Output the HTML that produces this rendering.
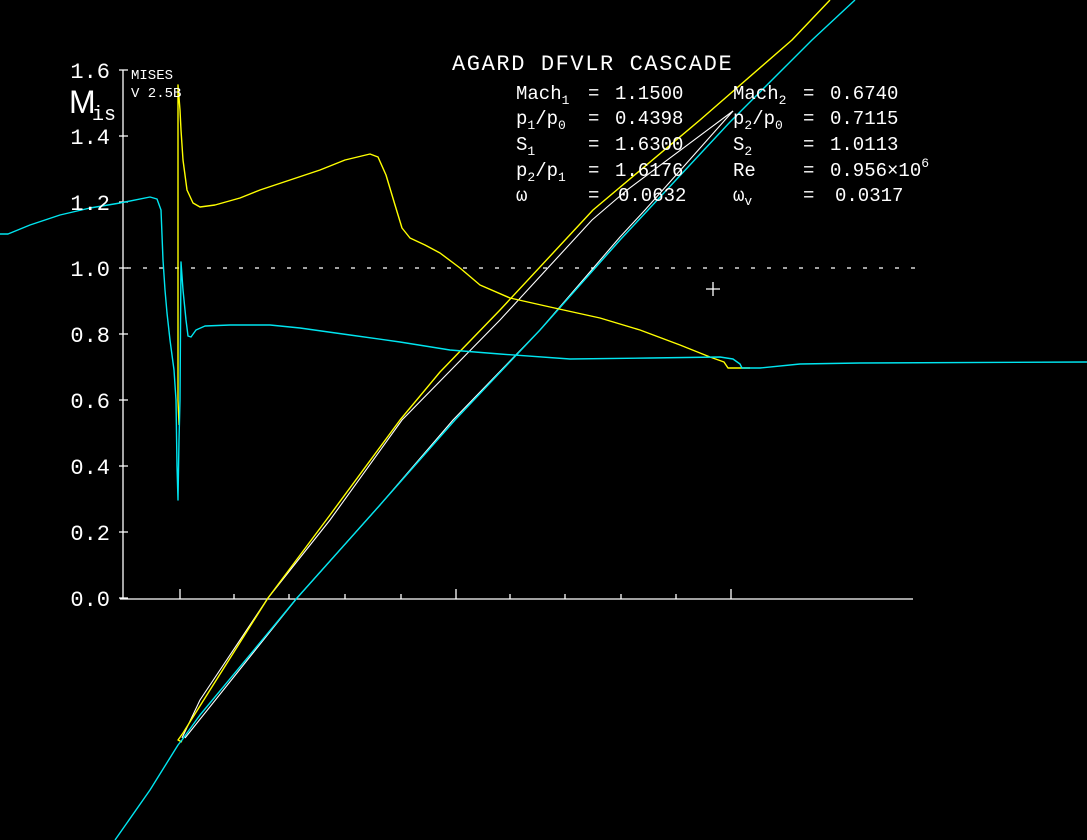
<!DOCTYPE html>
<html><head><meta charset="utf-8"><style>
html,body{margin:0;padding:0;background:#000;width:1087px;height:840px;overflow:hidden}
svg{display:block}
text{font-family:"Liberation Mono",monospace;fill:#fff}
</style></head><body>
<svg width="1087" height="840" viewBox="0 0 1087 840">
<g stroke="#fff" stroke-width="1.3" fill="none">
<line x1="123" y1="70" x2="123" y2="599"/>
<line x1="120" y1="599" x2="913" y2="599"/>
<path d="M119 70H128M119 136H128M119 202H128M119 268H128M119 334H128M119 400H128M119 466H128M119 532H128M119 598H128"/>
<path d="M180 589V599M234 594V599M289 594V599M345 594V599M401 594V599M456 589V599M510 594V599M565 594V599M621 594V599M676 594V599M731 589V599"/>
<line x1="127" y1="268" x2="915" y2="268" stroke-dasharray="4 12"/>
<path d="M706 289H720M713 282V296"/>
<!-- white blade -->
<path d="M733 111 L627 190 L592 220 L500 320 L402 420 L330 520 L268 598 L200 700 L182 738" stroke-width="1.1"/>
<path d="M733 111 L645 210 L620 237 L540 330 L453 420 L380 505 L297 598 L185 738" stroke-width="1.1"/>
</g>
<g fill="none" stroke-width="1.4" stroke-linejoin="round">
<!-- blade yellow -->
<path stroke="#ffff00" d="M830 0 L792 40 L700 120 L593 210 L500 310 L440 372 L400 420 L330 515 L268 598 L210 690 L183 733 L178 740 L182 742"/>
<!-- blade cyan -->
<path stroke="#00e5f0" d="M855 0 L812 40 L730 122 L648 210 L620 240 L540 330 L455 420 L380 505 L297 598 L200 715 L182 740 L178 745 L150 790 L115 840"/>
<!-- Mis yellow -->
<path stroke="#ffff00" d="M179 425 L178 400 L178 85 L180 110 L181 130 L183 160 L187 190 L193 203 L200 207 L215 205 L240 198 L260 190 L290 180 L320 170 L345 160 L370 154 L378 157 L386 175 L395 205 L402 228 L410 238 L425 245 L440 253 L460 268 L480 285 L510 298 L550 307 L600 318 L640 330 L680 345 L710 357 L724 362 L728 368 L750 368"/>
<!-- Mis cyan -->
<path stroke="#00e5f0" d="M0 234 L8 234 L30 225 L60 215 L90 208 L120 203 L150 197 L157 199 L161 210 L163 260 L165 290 L167 313 L170 340 L174 370 L176 400 L177 466 L178 500 L179 440 L180 400 L181 262 L183 290 L186 320 L188 336 L191 337 L196 330 L205 326 L230 325 L270 325 L300 328 L350 335 L400 342 L450 350 L500 354 L570 359 L650 358 L720 357 L733 359 L740 364 L742 368 L760 368 L800 364 L860 363 L1087 362"/>
</g>
<g font-size="22">
<text x="110" y="78" text-anchor="end">1.6</text>
<text x="110" y="144" text-anchor="end">1.4</text>
<text x="110" y="210" text-anchor="end">1.2</text>
<text x="110" y="276" text-anchor="end">1.0</text>
<text x="110" y="342" text-anchor="end">0.8</text>
<text x="110" y="408" text-anchor="end">0.6</text>
<text x="110" y="474" text-anchor="end">0.4</text>
<text x="110" y="540" text-anchor="end">0.2</text>
<text x="110" y="606" text-anchor="end">0.0</text>
</g>
<text x="69" y="113" font-size="32" font-family="Liberation Sans" style="font-family:'Liberation Sans',sans-serif">M</text>
<text x="92" y="120" font-size="20">is</text>
<text x="131" y="79" font-size="14">MISES</text>
<text x="131" y="97" font-size="14">V 2.5B</text>
<text x="452" y="70" font-size="22" letter-spacing="1.6">AGARD DFVLR CASCADE</text>
<g font-size="19">
<text x="516" y="99">Mach<tspan font-size="13" dy="5">1</tspan></text>
<text x="588" y="99">=</text><text x="615" y="99">1.1500</text>
<text x="516" y="124">p<tspan font-size="13" dy="5">1</tspan><tspan dy="-5">/p</tspan><tspan font-size="13" dy="5">0</tspan></text>
<text x="588" y="124">=</text><text x="615" y="124">0.4398</text>
<text x="516" y="150">S<tspan font-size="13" dy="5">1</tspan></text>
<text x="588" y="150">=</text><text x="615" y="150">1.6300</text>
<text x="516" y="176">p<tspan font-size="13" dy="5">2</tspan><tspan dy="-5">/p</tspan><tspan font-size="13" dy="5">1</tspan></text>
<text x="588" y="176">=</text><text x="615" y="176">1.6176</text>
<text x="516" y="201">ω</text>
<text x="588" y="201">=</text><text x="618" y="201">0.0632</text>
<text x="733" y="99">Mach<tspan font-size="13" dy="5">2</tspan></text>
<text x="803" y="99">=</text><text x="830" y="99">0.6740</text>
<text x="733" y="124">p<tspan font-size="13" dy="5">2</tspan><tspan dy="-5">/p</tspan><tspan font-size="13" dy="5">0</tspan></text>
<text x="803" y="124">=</text><text x="830" y="124">0.7115</text>
<text x="733" y="150">S<tspan font-size="13" dy="5">2</tspan></text>
<text x="803" y="150">=</text><text x="830" y="150">1.0113</text>
<text x="733" y="176">Re</text>
<text x="803" y="176">=</text><text x="830" y="176">0.956×10<tspan font-size="13" dy="-9">6</tspan></text>
<text x="733" y="201">ω<tspan font-size="13" dy="4">v</tspan></text>
<text x="803" y="201">=</text><text x="835" y="201">0.0317</text>
</g>
</svg>
</body></html>
